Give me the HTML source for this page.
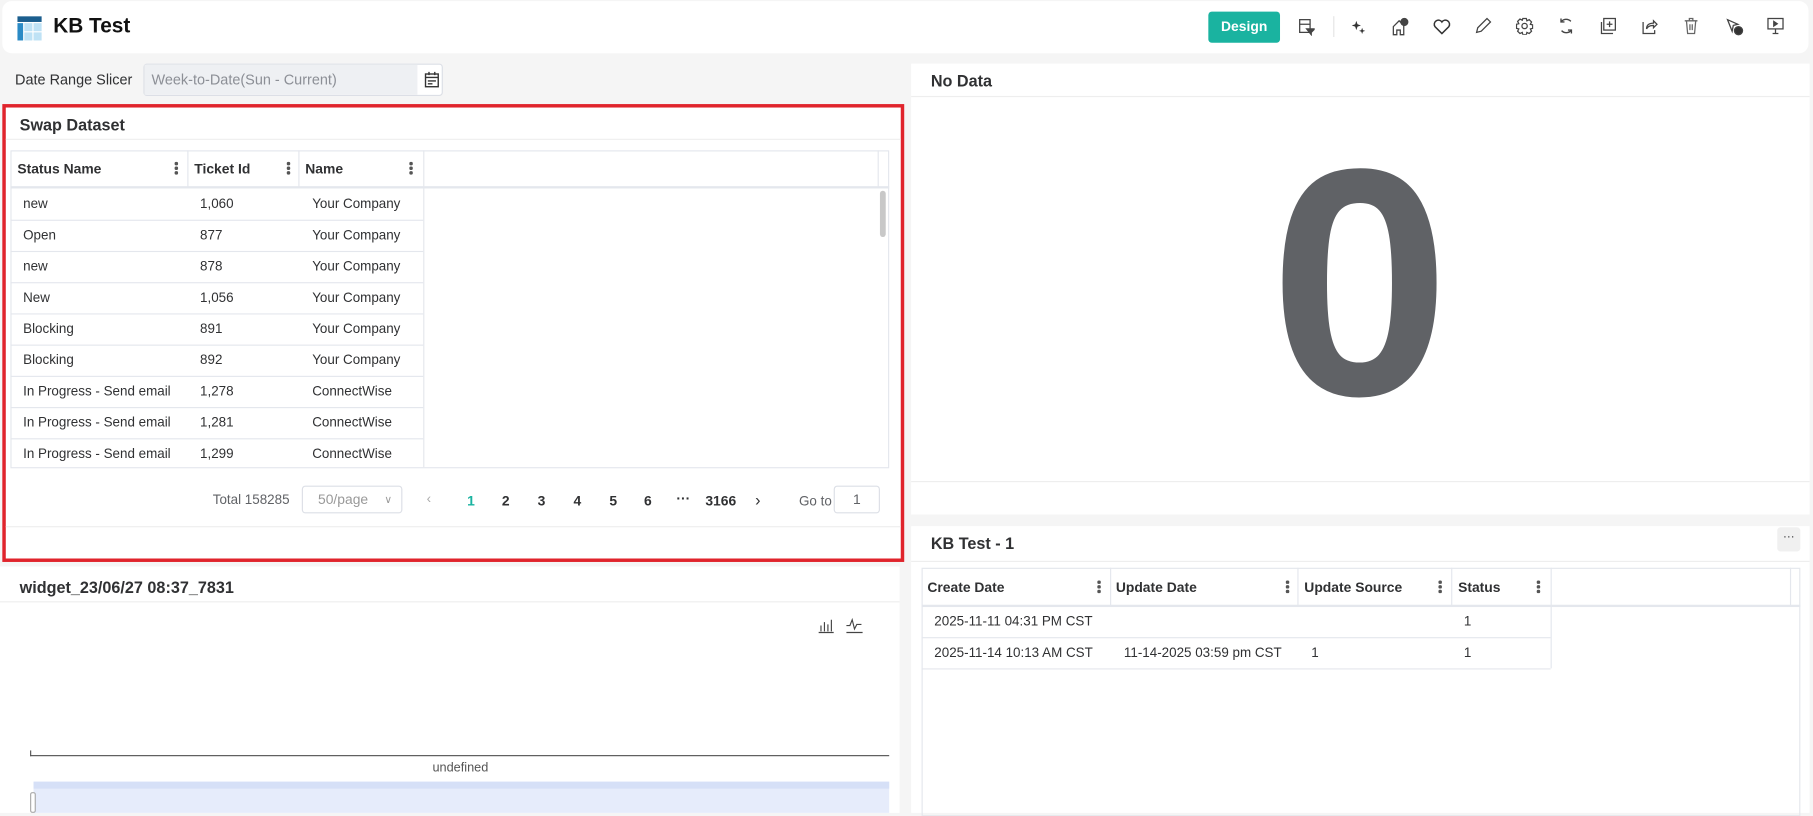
<!DOCTYPE html>
<html><head><meta charset="utf-8"><style>
*{box-sizing:border-box;margin:0;padding:0}
html,body{width:1813px;height:813px;overflow:hidden;background:#f5f5f5;font-family:"Liberation Sans",sans-serif;color:#303133}
#w{position:absolute;left:0;top:0;width:1568px;height:703px;transform:scale(1.1563);transform-origin:0 0}
.a{position:absolute}
.t{font-size:11.6px;color:#303133;white-space:nowrap}
.h{font-weight:bold;font-size:12px}
.ttl{font-weight:bold;font-size:14px;color:#303133}
.dots{position:absolute;width:3px;top:0}
.dots i{display:block;width:2.5px;height:2.5px;background:#555;border-radius:50%;margin:0 0 1.5px}
</style></head><body><div id="w">
<div class="a" style="left:2px;top:1px;width:1562px;height:45px;background:#fff;border-radius:8px"></div>
<svg class="a" style="left:15px;top:14px" width="22" height="21"><rect x="0" y="0" width="21" height="5" fill="#1b5e8e"/><rect x="0" y="6" width="5" height="15" fill="#2a8ac5"/><rect x="6" y="6" width="7" height="7" fill="#bfe2f5"/><rect x="14" y="6" width="7" height="7" fill="#bfe2f5"/><rect x="6" y="14" width="7" height="7" fill="#bfe2f5"/><rect x="14" y="14" width="7" height="7" fill="#bfe2f5"/></svg>
<div class="a" style="left:46px;top:12px;font-size:18px;font-weight:bold;color:#111">KB Test</div>
<div class="a" style="left:1045px;top:10px;width:62px;height:27px;background:#1ab3a0;border-radius:3px;color:#fff;font-size:12px;font-weight:bold;text-align:center;line-height:27px">Design</div>
<svg class="a" style="left:1123px;top:16px" width="14" height="15" fill="none" stroke="#444" stroke-width="1.1"><rect x="1" y="1" width="9" height="11"/><line x1="1" y1="5" x2="10" y2="5"/><path d="M7 9h7l-3 3v2z" fill="#444"/></svg>
<div class="a" style="left:1153px;top:14px;width:1px;height:18px;background:#e5e5e5"></div>
<svg class="a" style="left:1168px;top:17px" width="14" height="14" fill="#333"><path d="M5 1l1 3 3 1-3 1-1 3-1-3-3-1 3-1z"/><path d="M10 7l.7 2 2 .7-2 .7-.7 2-.7-2-2-.7 2-.7z"/></svg>
<svg class="a" style="left:1203px;top:15px" width="16" height="16" fill="none" stroke="#444" stroke-width="1.1"><path d="M2 15V8l5-5 4 4v8H8v-4H5v4z"/><circle cx="11.5" cy="4" r="3" fill="#444"/></svg>
<svg class="a" style="left:1239px;top:16px" width="16" height="14" fill="none" stroke="#333" stroke-width="1.3"><path d="M8 13L2 7a3.3 3.3 0 0 1 6-4 3.3 3.3 0 0 1 6 4z"/></svg>
<svg class="a" style="left:1275px;top:15px" width="15" height="15" fill="none" stroke="#444" stroke-width="1.1"><path d="M2 13l1-4 8-8 3 3-8 8z"/></svg>
<svg class="a" style="left:1311px;top:15px" width="15" height="15" fill="none" stroke="#444" stroke-width="1.1"><circle cx="7.5" cy="7.5" r="2.3"/><path d="M6 1h3l.5 2 2-1 2 2-1 2 2 .5v3l-2 .5 1 2-2 2-2-1-.5 2H6l-.5-2-2 1-2-2 1-2-2-.5V6l2-.5-1-2 2-2 2 1z"/></svg>
<svg class="a" style="left:1347px;top:15px" width="15" height="15" fill="none" stroke="#444" stroke-width="1.2"><path d="M11.5 3.5A5.5 5.5 0 0 0 3 4M3.5 11.5A5.5 5.5 0 0 0 12 11"/><path d="M3 1v3h3M12 14v-3H9"/></svg>
<svg class="a" style="left:1383px;top:15px" width="15" height="15" fill="none" stroke="#444" stroke-width="1.1"><rect x="4" y="1" width="10" height="10"/><path d="M2 4v10h10M9 3.5v5M6.5 6h5"/></svg>
<svg class="a" style="left:1419px;top:15px" width="15" height="15" fill="none" stroke="#444" stroke-width="1.1"><path d="M2 4v10h10v-3"/><path d="M5 10c0-4 3-5 6-5V3l3 3-3 3V7c-3 0-5 1-6 3z"/></svg>
<svg class="a" style="left:1456px;top:15px" width="13" height="15" fill="none" stroke="#666" stroke-width="1.1"><path d="M1 3h11M5 3V1h3v2M2.5 3l1 11h6l1-11M5.5 6v5M7.5 6v5"/></svg>
<svg class="a" style="left:1492px;top:15px" width="16" height="16" fill="none" stroke="#444" stroke-width="1.1"><path d="M2 2l9 4-4 1-1 5z"/><circle cx="11.5" cy="11.5" r="3.5" fill="#333"/></svg>
<svg class="a" style="left:1528px;top:15px" width="15" height="16" fill="none" stroke="#444" stroke-width="1.1"><rect x="1" y="1" width="13" height="9"/><path d="M6 3.5v4l3-2z" fill="#444"/><path d="M7.5 10v4M5 14h5"/></svg>

<div class="a t" style="left:13px;top:62px;font-size:12.5px">Date Range Slicer</div>
<div class="a" style="left:124px;top:55px;width:259px;height:28px;border:1px solid #dcdfe6;border-radius:3px;background:#fff"></div>
<div class="a" style="left:125px;top:56px;width:236px;height:26px;background:#eef0f3;color:#8c8f96;font-size:12.5px;line-height:26px;padding-left:6px">Week-to-Date(Sun - Current)</div>
<svg class="a" style="left:367px;top:62px" width="13" height="14" fill="none" stroke="#333" stroke-width="1.2"><rect x="1" y="2" width="11" height="11"/><path d="M1 5h11M4 0v3M9 0v3M3 8h7M3 10.5h4"/></svg>

<div class="a" style="left:2px;top:90px;width:780px;height:396px;background:#fff;border:3px solid #e0242c"></div>
<div class="a ttl" style="left:17px;top:100px">Swap Dataset</div>
<div class="a" style="left:5px;top:120px;width:774px;height:1px;background:#eee"></div>
<div class="a" style="left:9px;top:130px;width:760px;height:275px;border:1px solid #e4e7ed"></div>
<div class="a" style="left:9px;top:161px;width:760px;height:2px;background:#e4e7ed"></div>
<div class="a" style="left:162px;top:130px;width:1px;height:32px;background:#e4e7ed"></div>
<div class="a" style="left:258px;top:130px;width:1px;height:32px;background:#e4e7ed"></div>
<div class="a" style="left:366px;top:130px;width:1px;height:274px;background:#e4e7ed"></div>
<div class="a" style="left:759px;top:130px;width:1px;height:32px;background:#e4e7ed"></div>
<div class="a h" style="left:15px;top:139px">Status Name</div>
<div class="a h" style="left:168px;top:139px">Ticket Id</div>
<div class="a h" style="left:264px;top:139px">Name</div>
<div class="dots" style="left:151px;top:140px"><i></i><i></i><i></i></div>
<div class="dots" style="left:248px;top:140px"><i></i><i></i><i></i></div>
<div class="dots" style="left:354px;top:140px"><i></i><i></i><i></i></div>
<div class="a" style="left:761px;top:165px;width:5px;height:40px;background:#c8c8c8;border-radius:3px"></div>
<div id="rows"></div>

<div class="a t" style="left:184px;top:426px;color:#606266">Total 158285</div>
<div class="a" style="left:261px;top:420px;width:87px;height:24px;border:1px solid #dcdfe6;border-radius:3px;color:#999;font-size:12px;line-height:22px;padding-left:13px">50/page<span style="position:absolute;right:8px;font-size:9px">&#8744;</span></div>
<div class="a t" style="left:369px;top:425px;color:#aaa">&lsaquo;</div>
<div class="a h" style="left:404px;top:426px;color:#1ab3a0">1</div>
<div class="a h" style="left:434px;top:426px">2</div>
<div class="a h" style="left:465px;top:426px">3</div>
<div class="a h" style="left:496px;top:426px">4</div>
<div class="a h" style="left:527px;top:426px">5</div>
<div class="a h" style="left:557px;top:426px">6</div>
<div class="a h" style="left:585px;top:424px">&middot;&middot;&middot;</div>
<div class="a h" style="left:610px;top:426px">3166</div>
<div class="a t" style="left:653px;top:424px;font-size:14px">&rsaquo;</div>
<div class="a t" style="left:691px;top:427px;color:#606266">Go to</div>
<div class="a" style="left:721px;top:420px;width:40px;height:24px;border:1px solid #dcdfe6;border-radius:3px;font-size:12px;line-height:22px;text-align:center;color:#606266">1</div>
<div class="a" style="left:5px;top:455px;width:774px;height:1px;background:#eee"></div>

<div class="a" style="left:0;top:490px;width:778px;height:213px;background:#fff"></div>
<div class="a ttl" style="left:17px;top:500px">widget_23/06/27 08:37_7831</div>
<div class="a" style="left:0;top:520px;width:778px;height:1px;background:#eee"></div>
<svg class="a" style="left:707px;top:534px" width="15" height="14" fill="none" stroke="#444" stroke-width="1"><path d="M1 13h13M3 12V7M6 12V4M9 12V6M12 12V2"/></svg>
<svg class="a" style="left:731px;top:534px" width="16" height="14" fill="none" stroke="#444" stroke-width="1"><path d="M1 7h3l2-5 2 8 2-4h4M1 13h14"/></svg>
<div class="a" style="left:26px;top:653px;width:743px;height:1px;background:#555"></div>
<div class="a" style="left:26px;top:649px;width:1px;height:5px;background:#555"></div>
<div class="a t" style="left:374px;top:658px;font-size:11px;color:#555">undefined</div>
<div class="a" style="left:29px;top:676px;width:740px;height:27px;background:#e6ecfb"></div>
<div class="a" style="left:29px;top:676px;width:740px;height:6px;background:#d6e0f7"></div>
<div class="a" style="left:26px;top:685px;width:5px;height:18px;border:1px solid #aaa;border-radius:2px;background:#fff"></div>

<div class="a" style="left:788px;top:55px;width:777px;height:390px;background:#fff"></div>
<div class="a ttl" style="left:805px;top:62px">No Data</div>
<div class="a" style="left:788px;top:83px;width:777px;height:1px;background:#eee"></div>
<div class="a" style="left:1176px;top:105px;transform:translateX(-50%);font-size:280px;line-height:280px;font-weight:bold;color:#606266">0</div>
<div class="a" style="left:788px;top:416px;width:777px;height:1px;background:#eee"></div>

<div class="a" style="left:788px;top:455px;width:777px;height:248px;background:#fff"></div>
<div class="a ttl" style="left:805px;top:462px">KB Test - 1</div>
<div class="a" style="left:1537px;top:456px;width:20px;height:21px;background:#f0f0f0;border-radius:3px;font-size:10px;text-align:center;line-height:18px">&middot;&middot;&middot;</div>
<div class="a" style="left:788px;top:485px;width:777px;height:1px;background:#eee"></div>
<div class="a" style="left:797px;top:491px;width:760px;height:215px;border:1px solid #e4e7ed"></div>
<div class="a" style="left:797px;top:523px;width:760px;height:2px;background:#e4e7ed"></div>
<div class="a" style="left:960px;top:491px;width:1px;height:33px;background:#e4e7ed"></div>
<div class="a" style="left:1122px;top:491px;width:1px;height:33px;background:#e4e7ed"></div>
<div class="a" style="left:1255px;top:491px;width:1px;height:33px;background:#e4e7ed"></div>
<div class="a" style="left:1341px;top:491px;width:1px;height:87px;background:#e4e7ed"></div>
<div class="a" style="left:1548px;top:491px;width:1px;height:33px;background:#e4e7ed"></div>
<div class="a h" style="left:802px;top:501px">Create Date</div>
<div class="a h" style="left:965px;top:501px">Update Date</div>
<div class="a h" style="left:1128px;top:501px">Update Source</div>
<div class="a h" style="left:1261px;top:501px">Status</div>
<div class="dots" style="left:949px;top:502px"><i></i><i></i><i></i></div>
<div class="dots" style="left:1112px;top:502px"><i></i><i></i><i></i></div>
<div class="dots" style="left:1244px;top:502px"><i></i><i></i><i></i></div>
<div class="dots" style="left:1329px;top:502px"><i></i><i></i><i></i></div>
<div class="a" style="left:797px;top:551px;width:544px;height:1px;background:#e4e7ed"></div>
<div class="a" style="left:797px;top:578px;width:544px;height:1px;background:#e4e7ed"></div>
<div class="a t" style="left:808px;top:531px">2025-11-11 04:31 PM CST</div>
<div class="a t" style="left:1266px;top:531px">1</div>
<div class="a t" style="left:808px;top:558px">2025-11-14 10:13 AM CST</div>
<div class="a t" style="left:972px;top:558px">11-14-2025 03:59 pm CST</div>
<div class="a t" style="left:1134px;top:558px">1</div>
<div class="a t" style="left:1266px;top:558px">1</div>
<script>
var d=[["new","1,060","Your Company"],["Open","877","Your Company"],["new","878","Your Company"],["New","1,056","Your Company"],["Blocking","891","Your Company"],["Blocking","892","Your Company"],["In Progress - Send email","1,278","ConnectWise"],["In Progress - Send email","1,281","ConnectWise"],["In Progress - Send email","1,299","ConnectWise"]];
var h="";d.forEach(function(r,i){var y=163+i*27;h+='<div class="a t" style="left:20px;top:'+(y+7)+'px">'+r[0]+'</div><div class="a t" style="left:173px;top:'+(y+7)+'px">'+r[1]+'</div><div class="a t" style="left:270px;top:'+(y+7)+'px">'+r[2]+'</div>';if(i<8)h+='<div class="a" style="left:9px;top:'+(y+27)+'px;width:357px;height:1px;background:#e4e7ed"></div>';});
document.getElementById("rows").outerHTML=h;
</script>
</div></body></html>
